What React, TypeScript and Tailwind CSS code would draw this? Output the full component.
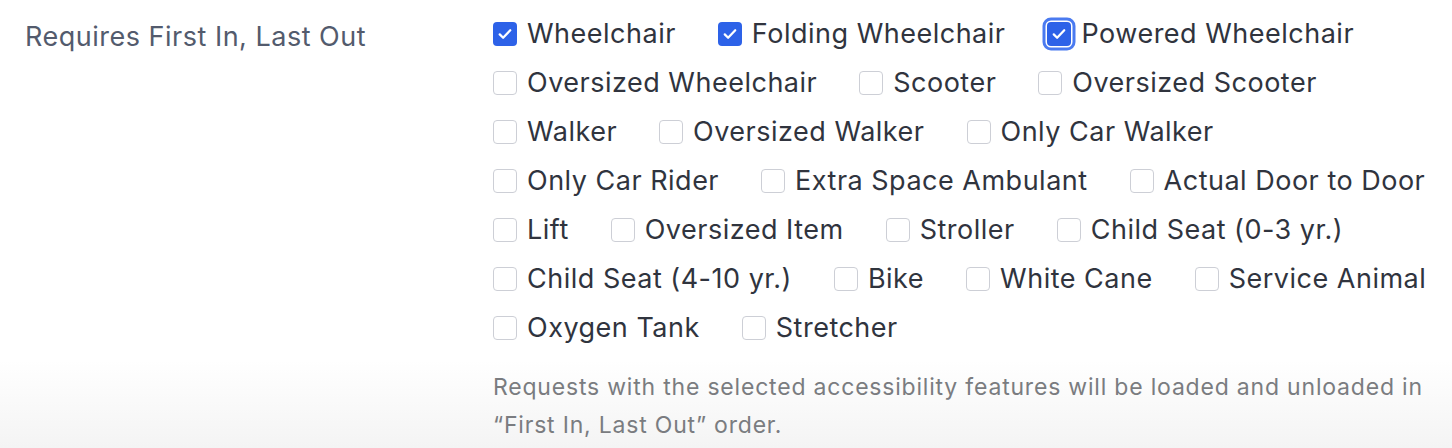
import React, { useState } from 'react';

const OPTIONS = [
  'Wheelchair',
  'Folding Wheelchair',
  'Powered Wheelchair',
  'Oversized Wheelchair',
  'Scooter',
  'Oversized Scooter',
  'Walker',
  'Oversized Walker',
  'Only Car Walker',
  'Only Car Rider',
  'Extra Space Ambulant',
  'Actual Door to Door',
  'Lift',
  'Oversized Item',
  'Stroller',
  'Child Seat (0-3 yr.)',
  'Child Seat (4-10 yr.)',
  'Bike',
  'White Cane',
  'Service Animal',
  'Oxygen Tank',
  'Stretcher',
];

const Checkbox: React.FC<{ checked: boolean; focused?: boolean; onClick: () => void }> = ({
  checked,
  focused,
  onClick,
}) => (
  <span
    onClick={onClick}
    className={
      checked
        ? 'flex h-[24px] w-[24px] shrink-0 items-center justify-center rounded-[4px] bg-[#2d62e8] ' +
          (focused ? 'ring-[3px] ring-[#4a7af0] ring-offset-[1.5px]' : '')
        : 'flex h-[24px] w-[24px] shrink-0 rounded-[4px] border-[1.5px] border-[#cdcfd6] bg-white'
    }
  >
    {checked && (
      <svg viewBox="0 0 24 24" className="h-[18px] w-[18px]" fill="none">
        <path d="M5 12.5l4.5 4.5L19 7" stroke="white" strokeWidth="3" strokeLinecap="round" strokeLinejoin="round" />
      </svg>
    )}
  </span>
);

const App: React.FC = () => {
  const [selected, setSelected] = useState<string[]>(['Wheelchair', 'Folding Wheelchair', 'Powered Wheelchair']);

  const toggle = (name: string) =>
    setSelected((s) => (s.includes(name) ? s.filter((x) => x !== name) : [...s, name]));

  return (
    <div className="h-[448px] w-full overflow-hidden bg-[linear-gradient(to_bottom,#ffffff_0px,#ffffff_360px,#f4f4f4_448px)] font-['Inter','Liberation_Sans',sans-serif]">
      <div className="flex pl-[25px] pt-[17px]">
        <div className="w-[468px] shrink-0 pt-[3px] text-[27px] leading-[34px] tracking-[0.5px] text-[#535b6d]">
          Requires First In, Last Out
        </div>
        <div className="w-[940px]">
          <div className="flex flex-wrap gap-x-[42px] gap-y-[15px]">
            {OPTIONS.map((name) => (
              <label key={name} className="flex h-[34px] cursor-pointer items-center gap-[10px]">
                <Checkbox
                  checked={selected.includes(name)}
                  focused={name === 'Powered Wheelchair'}
                  onClick={() => toggle(name)}
                />
                <span className="whitespace-nowrap text-[27px] leading-[34px] tracking-[0.5px] text-[#30343e]">
                  {name}
                </span>
              </label>
            ))}
          </div>
          <p className="mt-[23px] text-[23px] leading-[38px] tracking-[0.8px] text-[#7a7c80]">
            Requests with the selected accessibility features will be loaded and unloaded in “First In, Last Out”
            order.
          </p>
        </div>
      </div>
    </div>
  );
};

export default App;
